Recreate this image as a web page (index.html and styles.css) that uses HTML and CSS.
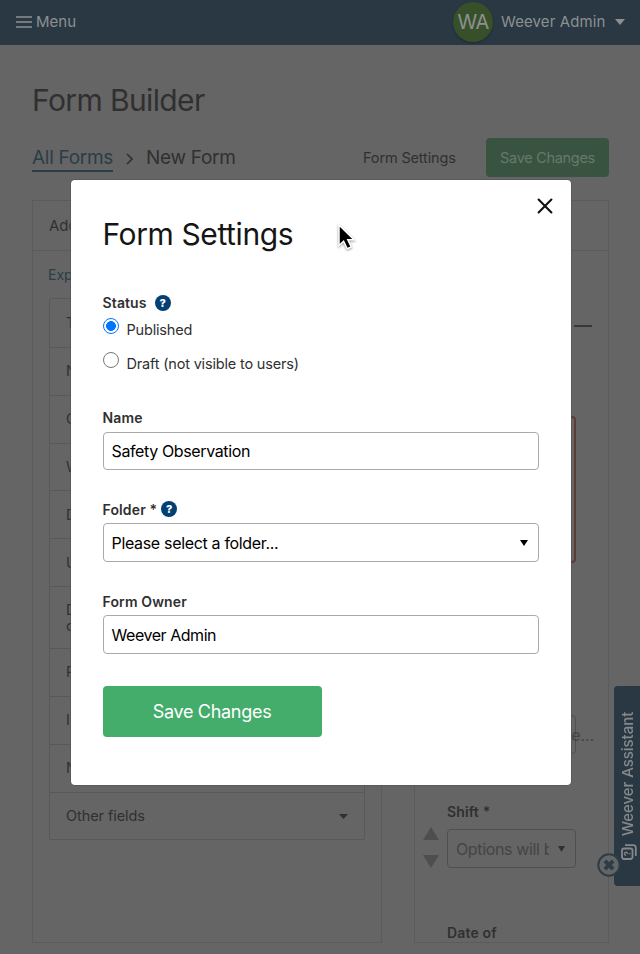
FILE: index.html
```html
<!DOCTYPE html>
<html lang="en">
<head>
<meta charset="utf-8">
<title>Form Builder</title>
<link rel="stylesheet" href="styles.css">
</head>
<body>
<header class="topbar">
  <div class="menu"><svg width="16" height="12" viewBox="0 0 16 12"><path d="M0 1h16M0 6h16M0 11h16" stroke="currentColor" stroke-width="1.6"/></svg><span class="menu-text">Menu</span></div>
  <div class="user"><span class="avatar">WA</span><span class="user-name">Weever Admin</span><svg width="10" height="6" viewBox="0 0 10 6"><path d="M0 0h10L5 6z" fill="currentColor"/></svg></div>
</header>
<main class="page">
  <h1 class="page-title">Form Builder</h1>
  <div class="toolbar">
    <a class="crumb-link">All Forms</a>
    <svg class="chevron" width="7" height="12" viewBox="0 0 7 12"><path d="M1 1l5 5-5 5" fill="none" stroke="currentColor" stroke-width="1.6"/></svg>
    <span class="crumb">New Form</span>
    <span class="settings-link">Form Settings</span>
    <span class="save-small">Save Changes</span>
  </div>
  <div class="columns">
    <section class="panel palette">
      <div class="panel-head">Add</div>
      <div class="expand">Exp</div>
      <ul class="fields">
        <li>T</li><li>N</li><li>C</li><li>W</li><li>D</li><li>U</li><li class="tall">D<br>c</li><li>P</li><li>I</li><li>N</li>
        <li><span>Other fields</span><svg width="9" height="5" viewBox="0 0 9 5"><path d="M0 0h9L4.500 5z" fill="currentColor"/></svg></li>
      </ul>
    </section>
    <section class="panel preview">
      <div class="panel-head"></div>
      <div class="collapse"></div>
      <div class="error-box"></div>
      <div class="text-box">ne...</div>
      <div class="label">Shift *</div>
      <div class="shift-row">
        <svg class="movers" width="16" height="41" viewBox="0 0 16 41"><path d="M8 0l8 13H0zM0 28h16L8 41z" fill="currentColor"/></svg>
        <div class="dim-select"><span class="option">Options will b</span><svg width="7" height="6" viewBox="0 0 7 6"><path d="M0 0h7L3.500 6z" fill="#303030"/></svg></div>
      </div>
      <div class="label date">Date of</div>
    </section>
  </div>
</main>
<aside class="assistant">
  <svg width="16" height="16" viewBox="0 0 16 16" fill="none" stroke="currentColor"><rect x="1" y="1" width="10.500" height="10.500" rx="2" stroke-width="1.800"/><path d="M4 14.800h8.200a2.600 2.600 0 0 0 2.600-2.600V4" stroke-width="1.800"/><path d="M4.600 5.100c0-2 3.300-2 3.300-.1 0 1.100-1.600 1.200-1.600 2.300M6.300 8.300v1.200" stroke-width="1.300"/></svg>
  <span class="assistant-text">Weever Assistant</span>
</aside>
<svg class="assistant-close" width="24" height="24" viewBox="0 0 24 24"><circle cx="12" cy="12" r="10.700" fill="#656565" stroke="#2b3d48" stroke-width="2"/><path d="M7.900 7.900l8.200 8.200M16.100 7.900l-8.200 8.200" stroke="#2b3d48" stroke-width="4"/></svg>

<div class="modal" role="dialog">
  <svg class="close" width="16" height="16" viewBox="0 0 16 16"><path d="M1.600 1.600l12.800 12.800M14.400 1.600L1.600 14.400" stroke="#111" stroke-width="2.100" stroke-linecap="round"/></svg>
  <h2 class="modal-title">Form Settings</h2>
  <div class="field-label status"><span>Status</span><span class="help">?</span></div>
  <div class="radio"><span class="dot on"></span><span class="radio-text published">Published</span></div>
  <div class="radio second"><span class="dot"></span><span class="radio-text">Draft (not visible to users)</span></div>
  <div class="field-label name">Name</div>
  <div class="input short"><span class="observation">Safety Observation</span></div>
  <div class="field-label folder"><span>Folder *</span><span class="help">?</span></div>
  <div class="input"><span class="placeholder">Please select a folder...</span><svg width="8" height="6" viewBox="0 0 8 6"><path d="M0 0h8L4 6z"/></svg></div>
  <div class="field-label owner">Form Owner</div>
  <div class="input"><span class="owner-name">Weever Admin</span></div>
  <div class="save">Save Changes</div>
</div>
<svg class="cursor" width="22" height="30" viewBox="0 0 22 30"><path d="M3 2v20.500l4.600-4.200 3.600 7.500 4.100-1.900-3.500-7.200h6.200z" fill="#000" stroke="#fff" stroke-width="1.500"/></svg>
</body>
</html>
```

FILE: styles.css
```css
* { box-sizing: border-box; }
body {
  position: relative;
  margin: 0;
  width: 640px;
  height: 954px;
  overflow: hidden;
  background: #656565;
  color: #303030;
  font-family: Inter, "Liberation Sans", sans-serif;
  font-size: 14.5px;
}
svg { display: block; flex: none; }
span, a, h1, h2 { white-space: nowrap; }

.topbar {
  display: flex;
  justify-content: space-between;
  height: 45px;
  padding: 0 15px 2px 16px;
  background: #293842;
  color: #8c9093;
  font-size: 15px;
}
.menu, .user { display: flex; align-items: center; }
.menu { gap: 4px; }
.avatar {
  width: 40px;
  height: 40px;
  margin-right: 8px;
  border-radius: 50%;
  background: #375029;
  box-shadow: 0 1px 2px #1d2a32;
  font-size: 20px;
  letter-spacing: -.6px;
  line-height: 41px;
  text-align: center;
}
.user-name { width: 104px; margin-right: 10px; letter-spacing: .12px; }

.page { padding: 36px 31px 0 32px; }
.page-title {
  margin: 0;
  font-size: 30px;
  font-weight: 400;
  letter-spacing: -.62px;
  line-height: 38px;
}
.toolbar { display: flex; align-items: center; height: 39px; margin-top: 19px; }
.crumb-link, .crumb { font-size: 19px; line-height: 26px; letter-spacing: -.29px; padding-top: 1px; }
.crumb-link { width: 81px; color: #2b3d48; border-bottom: 2px solid #2b3d48; line-height: 24px; padding-top: 2px; }
.chevron { margin: 2px 13px 0; }
.crumb { width: 90px; margin-right: 127px; }
.settings-link { width: 93px; margin-right: 30px; letter-spacing: -.15px; }
.save-small {
  width: 123px;
  height: 39px;
  border-radius: 4px;
  background: #385441;
  color: #66786c;
  letter-spacing: -.3px;
  line-height: 39px;
  text-align: center;
}

.columns { display: flex; justify-content: space-between; margin-top: 23px; }
.panel { height: 743px; border: 1px solid #5b5b5b; overflow: hidden; }
.palette { width: 350px; }
.preview { width: 195px; }
.panel-head { height: 50px; padding-left: 16px; border-bottom: 1px solid #5b5b5b; font-size: 15px; line-height: 50px; }
.expand { padding: 15px 0 0 15px; color: #2b3d48; font-size: 14px; line-height: 18px; }
.fields { margin: 14px 16px 0; padding: 0; border: 1px solid #595959; list-style: none; border-radius: 2px; }
.fields li { display: flex; align-items: center; justify-content: space-between; height: 47.85px; padding: 0 16px; line-height: 16px; letter-spacing: -.08px; }
.fields li + li { border-top: 1px solid #595959; }
.fields .tall { height: 62px; }
.collapse { height: 2px; width: 18px; margin: 74px 0 0 159px; background: #383838; }
.error-box { width: 129px; height: 147px; margin: 89px 0 0 32px; border: 2px solid #5d3c36; border-radius: 4px; }
.text-box { width: 129px; height: 39px; margin: 152px 0 0 32px; padding-left: 114px; border: 1px solid #505050; border-radius: 4px; color: #444; font-size: 16px; line-height: 38px; letter-spacing: -.1px; }
.label { margin: 48px 0 0 32px; font-weight: 600; font-size: 14px; line-height: 20px; letter-spacing: .15px; }
.shift-row { display: flex; align-items: flex-start; gap: 8px; margin: 5px 0 0 8px; }
.movers { color: #4e4e4e; }
.dim-select { display: flex; align-items: center; width: 129px; height: 39px; margin-top: 2px; padding-left: 8px; border: 1px solid #505050; border-radius: 4px; color: #444; font-size: 16px; letter-spacing: -.36px; }
.option { width: 93px; margin-right: 9px; overflow: hidden; line-height: 24px; }
.label.date { margin-top: 55px; }

.assistant {
  position: absolute;
  top: 686px;
  right: 0;
  display: flex;
  flex-direction: column-reverse;
  align-items: center;
  gap: 8px;
  width: 26px;
  height: 200px;
  padding: 0 0 26px 3px;
  border-radius: 4px 0 0 4px;
  background: #293842;
  color: #85898c;
}
.assistant svg { transform: rotate(-90deg); }
.assistant-text { writing-mode: vertical-rl; transform: rotate(180deg); margin-right: 2px; height: 125px; font-size: 15px; font-weight: 500; line-height: 20px; letter-spacing: -.05px; }
.assistant-close { position: absolute; top: 853px; left: 596.5px; }

.modal {
  position: absolute;
  top: 179.500px;
  left: 70.500px;
  width: 500px;
  height: 605px;
  padding: 35px 32px 0;
  border-radius: 4px;
  background: #fff;
  box-shadow: 0 0 0 .5px #505050;
}
.close { position: absolute; top: 18.500px; right: 18px; }
.modal-title { margin: 0; color: #151515; font-size: 30px; font-weight: 400; letter-spacing: -.4px; line-height: 38px; }
.field-label { display: flex; align-items: center; height: 18px; font-size: 14px; font-weight: 600; letter-spacing: .13px; }
.status { gap: 8px; margin-top: 41.400px; }
.help { width: 16px; height: 16px; border-radius: 50%; background: #034074; color: #fff; font-size: 11px; font-weight: 800; line-height: 16px; text-align: center; }
.radio { display: flex; gap: 8px; height: 24px; margin-top: 6px; }
.radio.second { margin-top: 10px; }
.dot { width: 16px; height: 16px; border: 1px solid #777; border-radius: 50%; background: #fff; }
.dot.on { border: 1px solid #0075ff; background: radial-gradient(circle, #0075ff 4.600px, #fff 5.200px); }
.radio-text { line-height: 23px; letter-spacing: -.18px; }
.name { margin-top: 33.100px; }
.input { display: flex; align-items: center; justify-content: space-between; height: 39px; margin-top: 5px; padding: 0 10px 0 8px; border: 1px solid #aaa; border-radius: 4px; color: #000; font-size: 16px; }
.input.short { height: 38px; }
.observation { letter-spacing: -.37px; }
.placeholder { letter-spacing: -.33px; }
.owner-name { letter-spacing: -.45px; }
.folder { gap: 4px; margin-top: 30.500px; }
.owner { margin-top: 30px; }
.save { width: 219px; height: 51px; margin-top: 31.500px; border-radius: 4px; background: #44ad6c; color: #fff; font-size: 18px; letter-spacing: -.3px; line-height: 51px; text-align: center; }
.cursor { position: absolute; top: 223px; left: 336px; filter: drop-shadow(0 1px 1px #999); }
```
